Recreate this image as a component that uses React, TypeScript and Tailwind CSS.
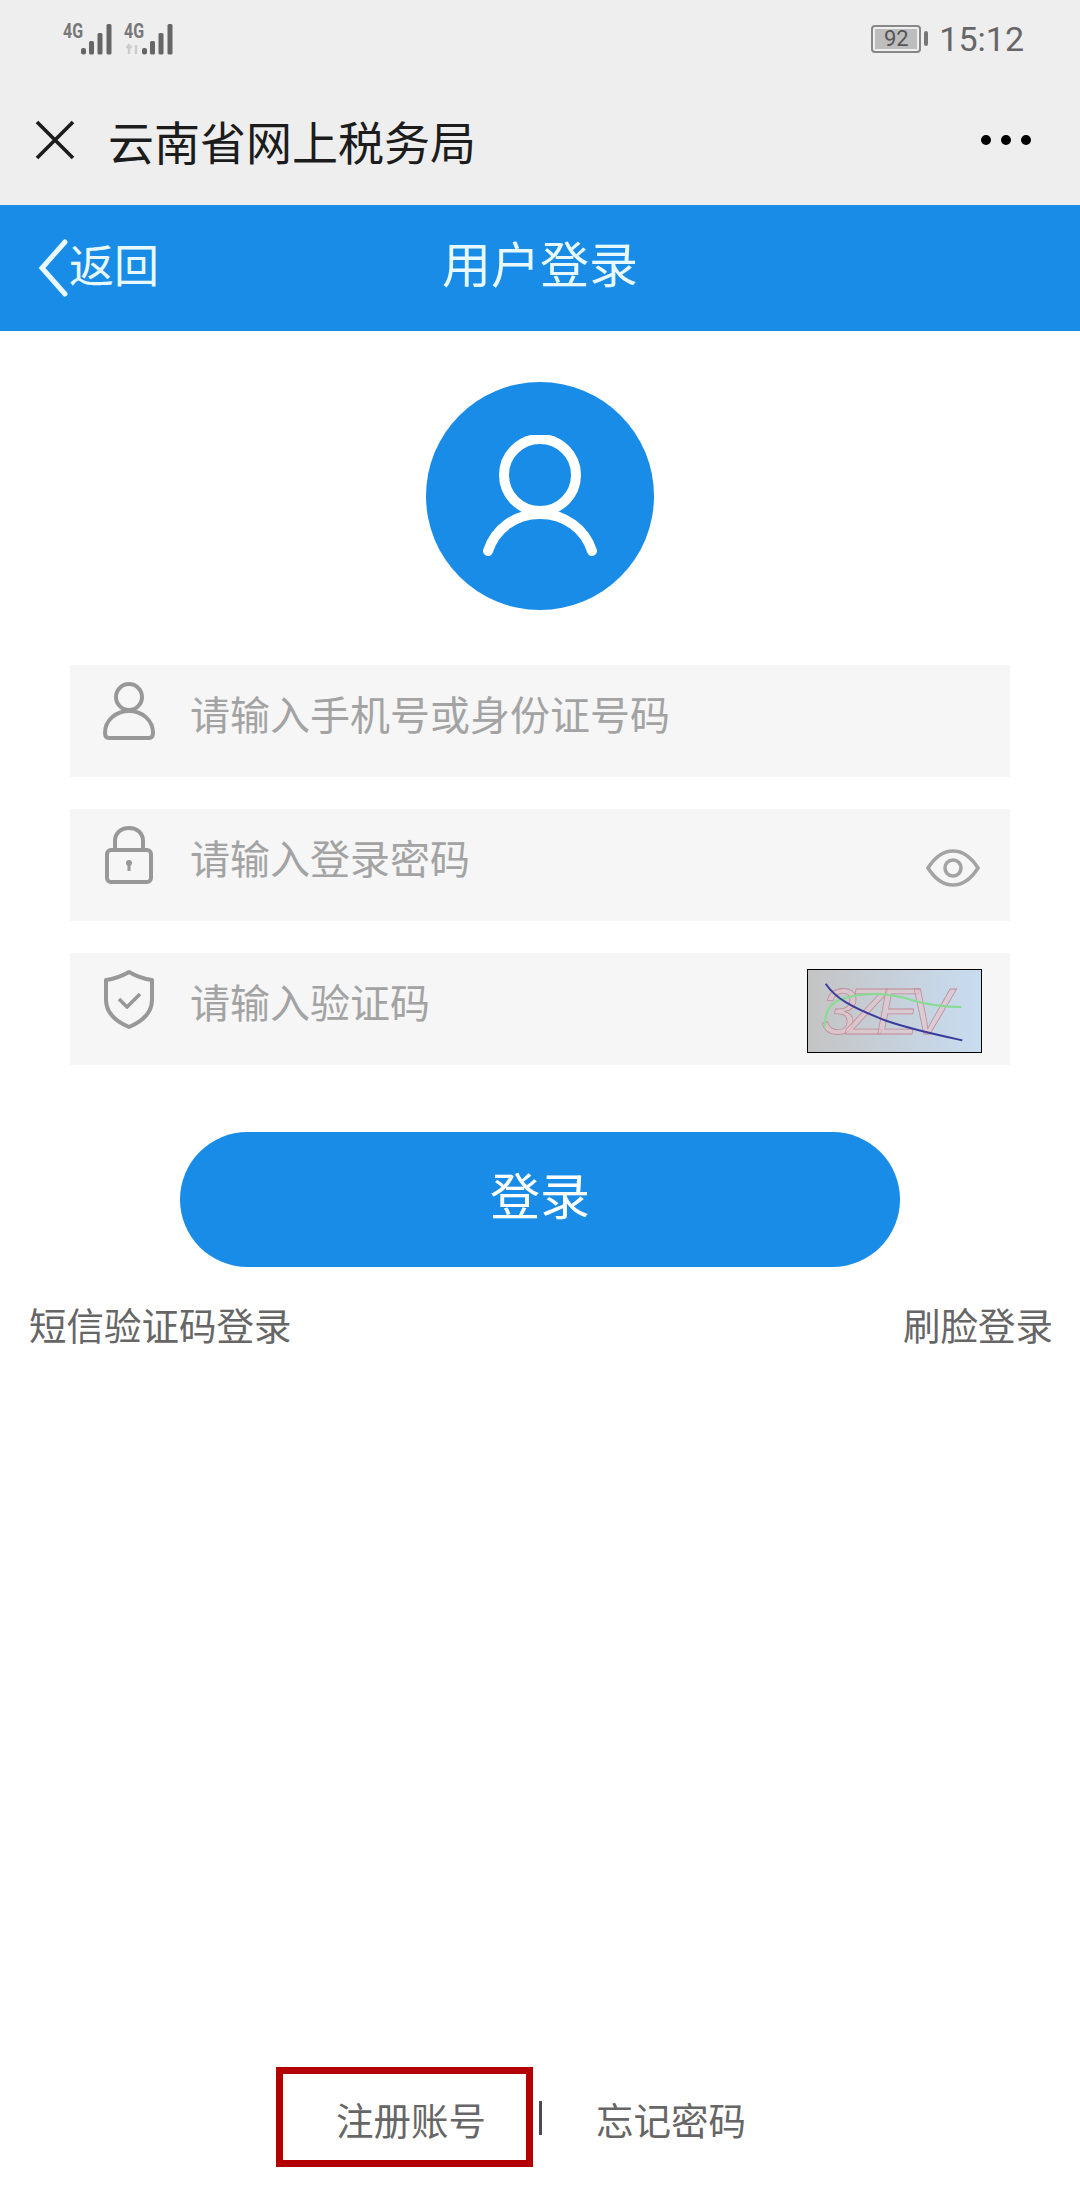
const cjk = "font-['Noto_Sans_CJK_SC','Noto_Sans',sans-serif]";

const Signal = ({ arrows }: { arrows?: boolean }) => (
  <div className="relative flex h-[32px] w-[50px] items-start">
    <span className="font-['Roboto',sans-serif] text-[20px] leading-[17px] font-bold text-[#777777] [transform:scaleX(0.8)] origin-left">
      4G
    </span>
    <svg width="50" height="32" viewBox="0 0 50 32" className="absolute top-0 left-0">
      {arrows && <path d="M5 31v-9M2.5 25 5 22l2.5 3M12 22v9" stroke="#cccccc" strokeWidth="2.4" fill="none" />}
      <rect x="18" y="25" width="5" height="6.5" rx="2" fill="#666666" />
      <rect x="26" y="18" width="5" height="13.5" rx="1.5" fill="#666666" />
      <rect x="34.5" y="10" width="5" height="21.5" rx="1.5" fill="#666666" />
      <rect x="43.5" y="1" width="5" height="30.5" rx="1.5" fill="#666666" />
    </svg>
  </div>
);

const StatusBar = () => (
  <div className="flex h-[76px] items-center pt-[1px] pr-[56px] pl-[63px]">
    <div className="flex gap-[11px]">
      <Signal />
      <Signal arrows />
    </div>
    <div className="ml-auto flex items-center">
      <div className="flex h-[28px] w-[50px] items-center justify-center rounded-[4px] border-2 border-[#888888] p-[2px]">
        <div className="flex h-full w-full items-center justify-center bg-[#bdbdbd] font-['Roboto',sans-serif] text-[22px] leading-none text-[#555555]">
          92
        </div>
      </div>
      <div className="ml-[3px] h-[15px] w-[4px] rounded-[2px] bg-[#777777]" />
      <span className="ml-[11px] font-['Roboto',sans-serif] text-[34px] leading-none text-[#666666]">15:12</span>
    </div>
  </div>
);

const TitleBar = () => (
  <div className="flex h-[129px] items-center pr-[49px] pl-[35px] pb-[2px]">
    <svg width="40" height="40" viewBox="0 0 40 40" fill="none" stroke="#1c1c1c" strokeWidth="3.6">
      <path d="M2 2 38 38M38 2 2 38" />
    </svg>
    <span className={`${cjk} ml-[33px] text-[46px] leading-none text-[#1c1c1c]`}>云南省网上税务局</span>
    <div className="ml-auto flex gap-[10px]">
      <div className="h-[10px] w-[10px] rounded-full bg-black" />
      <div className="h-[10px] w-[10px] rounded-full bg-black" />
      <div className="h-[10px] w-[10px] rounded-full bg-black" />
    </div>
  </div>
);

const BlueBar = () => (
  <div className="relative flex h-[126px] items-center justify-center bg-[#188ce6]">
    <div className="absolute left-[37px] flex items-center">
      <svg width="32" height="58" viewBox="0 0 32 58" fill="none" stroke="#e8f8ff" strokeWidth="5" strokeLinecap="round">
        <path d="M28 3 5 29l23 26" />
      </svg>
      <span className={`${cjk} mb-[10px] text-[45px] leading-none text-[#e8f8ff]`}>返回</span>
    </div>
    <span className={`${cjk} mb-[14px] text-[49px] leading-none text-[#e8f8ff]`}>用户登录</span>
  </div>
);

const Avatar = () => (
  <div className="mt-[51px] flex h-[228px] w-[228px] items-center justify-center rounded-full bg-[#188ce6]">
    <svg width="114" height="122" viewBox="0 0 114 122" fill="none" stroke="white" strokeWidth="10" strokeLinecap="round">
      <circle cx="57" cy="40" r="36" />
      <path d="M5 116C12 94 32 79 57 79s45 15 52 37" />
    </svg>
  </div>
);

const UserIcon = () => (
  <svg width="56" height="60" viewBox="0 0 56 60" fill="none" stroke="#989898" strokeWidth="4">
    <circle cx="28" cy="16" r="13" />
    <path d="M4 52c0-13 11-22 24-22s24 9 24 22c0 3-1 5-4 5H8c-3 0-4-2-4-5Z" />
  </svg>
);

const LockIcon = () => (
  <svg width="50" height="58" viewBox="0 0 50 58" fill="none" stroke="#989898" strokeWidth="4">
    <rect x="3" y="24" width="44" height="32" rx="4" />
    <path d="M11 24V15C11 7 17 2 25 2s14 5 14 13v9" />
    <circle cx="25" cy="37" r="3" fill="#989898" stroke="none" />
    <path d="M25 38v7" strokeWidth="3" />
  </svg>
);

const ShieldIcon = () => (
  <svg width="52" height="60" viewBox="0 0 52 60" fill="none" stroke="#989898" strokeWidth="4" strokeLinejoin="round">
    <path d="M26 3c7 4 14 7 23 8v20c0 12-9 21-23 27C12 52 3 43 3 31V11c9-1 16-4 23-8Z" />
    <path d="M16 30l8 8 13-13" strokeWidth="3.6" />
  </svg>
);

const EyeIcon = () => (
  <svg width="54" height="38" viewBox="0 0 54 38" fill="none" stroke="#a3a3a3" strokeWidth="3.6">
    <path d="M2 19C9 8 17 2 27 2s18 6 25 17c-7 11-15 17-25 17S9 30 2 19Z" />
    <circle cx="27" cy="19" r="8" />
  </svg>
);

const Captcha = () => (
  <svg width="175" height="84" viewBox="0 0 175 84" className="border border-black bg-gradient-to-r from-[#c4c4c4] to-[#c8dcf0]">
    <text
      x="12"
      y="66"
      fontFamily="'Liberation Sans', sans-serif"
      fontStyle="italic"
      fontSize="66"
      fill="#e6c4cc"
      fillOpacity="0.6"
      stroke="#c08c98"
      strokeWidth="0.8"
      textLength="134"
    >
      3ZEV
    </text>
    <path d="M16 60C16 44 20 36 30 31c24-9 52-8 76 0 20 6 40 7 50 7" fill="none" stroke="#86dc92" strokeWidth="2" />
    <path d="M17 14c10 15 26 24 62 38 26 9 50 14 78 20" fill="none" stroke="#3c3c9c" strokeWidth="2" />
  </svg>
);

const Field = ({
  icon,
  label,
  right,
  textTop,
}: {
  icon: React.ReactNode;
  label: string;
  right?: React.ReactNode;
  textTop: string;
}) => (
  <div className="flex h-[112px] w-[940px] items-start bg-[#f6f6f6] pr-[28px]">
    <div className="flex h-[92px] w-[120px] items-center justify-center pr-[3px]">{icon}</div>
    <span className={`${cjk} ${textTop} text-[40px] leading-none whitespace-nowrap text-[#a3a3a3]`}>{label}</span>
    {right}
  </div>
);

export default function App() {
  return (
    <div className="flex h-[2200px] w-[1080px] flex-col bg-white">
      <div className="bg-[#eeeeee]">
        <StatusBar />
        <TitleBar />
      </div>
      <BlueBar />
      <div className="flex flex-1 flex-col items-center">
        <Avatar />
        <div className="mt-[55px] flex flex-col gap-[32px]">
          <Field icon={<UserIcon />} label="请输入手机号或身份证号码" textTop="mt-[28px]" />
          <Field
            icon={<LockIcon />}
            label="请输入登录密码"
            textTop="mt-[28px]"
            right={
              <div className="mt-[40px] ml-auto flex pr-[2px]">
                <EyeIcon />
              </div>
            }
          />
          <Field
            icon={<ShieldIcon />}
            label="请输入验证码"
            textTop="mt-[28px]"
            right={
              <div className="mt-[16px] ml-auto flex">
                <Captcha />
              </div>
            }
          />
        </div>
        <button className={`${cjk} mt-[67px] h-[135px] w-[720px] rounded-full bg-[#188ce6] pb-[14px] text-[50px] leading-none text-white`}>
          登录
        </button>
        <div className={`${cjk} mt-[38px] flex w-full justify-between pr-[27px] pl-[29px] text-[37.5px] leading-none text-[#666666]`}>
          <span>短信验证码登录</span>
          <span>刷脸登录</span>
        </div>
        <div className={`${cjk} mt-auto mb-[63px] flex items-center text-[37.5px] leading-none text-[#666666]`}>
          <div className="relative ml-[2px]">
            <span>注册账号</span>
            <div className="absolute top-[-33px] left-[-60px] h-[100px] w-[257px] border-[7px] border-[#b30000]" />
          </div>
          <div className="ml-[53px] h-[34px] w-[3px] bg-[#4c4c4c]" />
          <span className="ml-[54px]">忘记密码</span>
        </div>
      </div>
    </div>
  );
}
